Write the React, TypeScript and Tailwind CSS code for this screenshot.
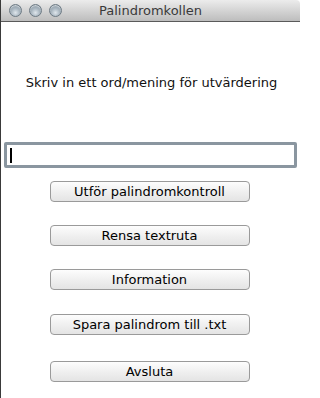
const buttons = [
  { label: "Utför palindromkontroll", mt: "mt-[13px]" },
  { label: "Rensa textruta", mt: "mt-[23px]" },
  { label: "Information", mt: "mt-[23px]" },
  { label: "Spara palindrom till .txt", mt: "mt-[24px]" },
  { label: "Avsluta", mt: "mt-[26px]" },
]

function Light() {
  return (
    <span className="w-[13px] h-[13px] rounded-full border border-[#6d7a84] bg-[radial-gradient(circle_at_50%_70%,#dfe6ec_0%,#a9b6c0_45%,#7d8c97_100%)] shadow-[inset_0_1px_1px_rgba(255,255,255,0.6)]" />
  )
}

export default function App() {
  return (
    <div
      className="w-[300px] h-[398px] bg-white border-l border-[#3a3a3a] flex flex-col overflow-hidden text-[#111]"
      style={{ fontFamily: '"DejaVu Sans", "Liberation Sans", sans-serif' }}
    >
      {/* Title bar */}
      <div className="relative h-[22px] shrink-0 flex items-center bg-gradient-to-b from-[#ececec] to-[#bdbdbd] border-b border-[#5a5a5a] rounded-tr-[4px]">
        <div className="flex items-center gap-[7px] pl-[8px]">
          <Light />
          <Light />
          <Light />
        </div>
        <span className="absolute inset-x-0 text-center text-[13px] text-[#3a3a3a] leading-[22px]">
          Palindromkollen
        </span>
      </div>

      {/* Content */}
      <p className="mt-[52px] text-center text-[13px] leading-[17px] pl-[2px]">
        Skriv in ett ord/mening för utvärdering
      </p>

      <div className="mt-[51px] mx-[3px] h-[26px] border-[3px] border-[#8a96a0] rounded-[2px] bg-white flex items-center pl-[3px]">
        <span className="w-[2px] h-[15px] bg-black" />
      </div>

      <div className="flex flex-col items-center">
        {buttons.map((b) => (
          <button
            key={b.label}
            className={`${b.mt} ml-[-2px] w-[200px] h-[21px] rounded-[4px] border border-[#9a9a9a] bg-gradient-to-b from-[#fdfdfd] via-[#f0f0f0] to-[#e4e4e4] text-[13px] leading-[19px] text-black`}
          >
            {b.label}
          </button>
        ))}
      </div>
    </div>
  )
}
